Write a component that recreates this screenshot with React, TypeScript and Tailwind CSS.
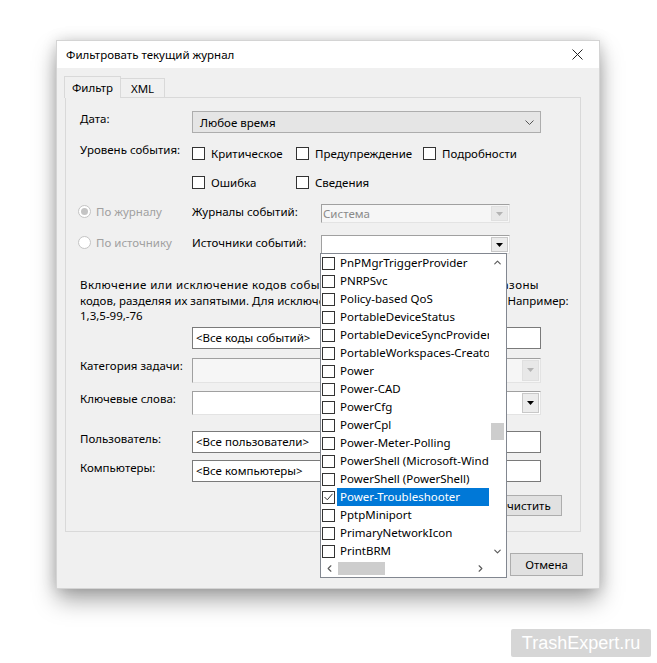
import React from 'react'
import clsx from 'clsx'
import { ChevronDown, ChevronLeft, ChevronRight, ChevronUp } from 'lucide-react'

const sources = [
  'PnPMgrTriggerProvider',
  'PNRPSvc',
  'Policy-based QoS',
  'PortableDeviceStatus',
  'PortableDeviceSyncProvider',
  'PortableWorkspaces-Creator',
  'Power',
  'Power-CAD',
  'PowerCfg',
  'PowerCpl',
  'Power-Meter-Polling',
  'PowerShell (Microsoft-Windows-PowerShell)',
  'PowerShell (PowerShell)',
  'Power-Troubleshooter',
  'PptpMiniport',
  'PrimaryNetworkIcon',
  'PrintBRM',
]

function Box({ checked = false }: { checked?: boolean }) {
  return (
    <span className="flex h-[13px] w-[13px] shrink-0 items-center justify-center border border-[#333] bg-white">
      {checked && (
        <svg width="9" height="8" viewBox="0 0 9 8">
          <path d="M0.5 4 L3.3 6.8 L8.5 0.8" fill="none" stroke="#333" strokeWidth="1" />
        </svg>
      )}
    </span>
  )
}

function Check({ label }: { label: string }) {
  return (
    <div className="flex items-center gap-[6px]">
      <Box />
      <span>{label}</span>
    </div>
  )
}

function Radio({ label, checked = false }: { label: string; checked?: boolean }) {
  return (
    <div className="-ml-[2px] flex items-center gap-[5px] text-[#a0a0a0]">
      <span className="flex h-[13px] w-[13px] items-center justify-center rounded-full border border-[#c4c4c4] bg-white">
        {checked && <span className="h-[7px] w-[7px] rounded-full bg-[#c4c4c4]" />}
      </span>
      <span>{label}</span>
    </div>
  )
}

function ArrowBtn({ disabled = false }: { disabled?: boolean }) {
  return (
    <span
      className={clsx(
        'flex h-full w-[17px] shrink-0 items-center justify-center border',
        disabled ? 'border-[#e0e0e0] bg-[#e8e8e8]' : 'border-[#c8c8c8] bg-[#ececec]'
      )}
    >
      <svg width="7" height="4" viewBox="0 0 7 4">
        <path d="M0 0h7L3.5 4z" fill={disabled ? '#b4b4b4' : '#000'} />
      </svg>
    </span>
  )
}

function Classic({ text, disabled = false, className }: { text?: string; disabled?: boolean; className: string }) {
  return (
    <div
      className={clsx(
        'flex items-stretch border-b border-l border-r border-t border-b-[#e3e3e3] border-l-[#a0a0a0] border-r-[#e3e3e3] border-t-[#a0a0a0] p-[1px]',
        disabled ? 'bg-[#f6f6f6]' : 'bg-white',
        className
      )}
    >
      <span className={clsx('flex flex-1 items-center', disabled && 'text-[#8a8a8a]')}>{text}</span>
      <ArrowBtn disabled={disabled} />
    </div>
  )
}

function TextBox({ text }: { text: string }) {
  return (
    <div className="flex h-[22px] w-[349px] items-center border border-[#7a7a7a] bg-white pl-[3px]">{text}</div>
  )
}

function SourceList() {
  return (
    <div className="absolute left-[263px] top-[212px] z-20 grid h-[325px] w-[187px] grid-cols-[1fr_17px] grid-rows-[1fr_17px] border border-[#828790] bg-white">
      <div className="min-w-0 overflow-hidden">
        {sources.map((s) => {
          const sel = s === 'Power-Troubleshooter'
          return (
            <div key={s} className="flex h-[18px] items-center pl-[1px]">
              <Box checked={sel} />
              <span
                className={clsx(
                  'ml-[2px] flex h-full flex-1 items-center whitespace-nowrap pb-[1px] pl-[3px]',
                  sel && 'bg-[#0078d7] text-white'
                )}
              >
                {s}
              </span>
            </div>
          )
        })}
      </div>
      <div className="grid grid-rows-[17px_1fr_17px]">
        <div className="flex items-center justify-center text-[#5a5a5a]">
          <ChevronUp size={11} strokeWidth={2.5} />
        </div>
        <div className="pt-[152px]">
          <div className="mx-[2px] h-[17px] bg-[#cdcdcd]" />
        </div>
        <div className="flex items-center justify-center text-[#5a5a5a]">
          <ChevronDown size={11} strokeWidth={2.5} />
        </div>
      </div>
      <div className="grid grid-cols-[17px_1fr_17px]">
        <div className="flex items-center justify-center text-[#5a5a5a]">
          <ChevronLeft size={11} strokeWidth={2.5} />
        </div>
        <div className="py-[2px]">
          <div className="h-full w-[47px] bg-[#cdcdcd]" />
        </div>
        <div className="flex items-center justify-center text-[#5a5a5a]">
          <ChevronRight size={11} strokeWidth={2.5} />
        </div>
      </div>
      <div />
    </div>
  )
}

export default function App() {
  return (
    <div className="relative h-[663px] w-[657px] overflow-hidden bg-white pl-[57px] pt-[41px] font-['Noto_Sans',sans-serif] text-[11.5px] leading-[15px] text-black">
      <div className="relative flex h-[547px] w-[542px] flex-col bg-[#f0f0f0] shadow-[0_0_0_1px_#d4d4d4,0_12px_22px_rgba(0,0,0,0.35),0_0_14px_rgba(0,0,0,0.18)]">
        {/* title bar */}
        <div className="flex h-[27px] shrink-0 items-center justify-between bg-white pl-[9px] pr-[16px]">
          <span>Фильтровать текущий журнал</span>
          <svg width="11" height="11" viewBox="0 0 11 11">
            <path d="M0.5 0.5 L10.5 10.5 M10.5 0.5 L0.5 10.5" stroke="#222" strokeWidth="1" />
          </svg>
        </div>

        <div className="flex flex-1 flex-col pl-[8px] pr-[18px] pt-[8px]">
          {/* tabs */}
          <div className="flex h-[21px] items-end">
            <div className="relative z-10 -mb-px -ml-px flex h-[22px] w-[57px] items-center justify-center border border-b-0 border-[#d9d9d9] bg-[#f0f0f0]">
              Фильтр
            </div>
            <div className="flex h-[19px] w-[44px] items-center justify-center border border-b-0 border-l-0 border-[#d9d9d9] bg-[#f0f0f0]">
              XML
            </div>
          </div>

          {/* panel */}
          <div className="flex h-[435px] flex-col border border-[#d9d9d9] pl-[14px] pr-[18px] pt-[13px]">
            <div className="flex h-[22px]">
              <div className="w-[112px] shrink-0">Дата:</div>
              <div className="flex w-[349px] items-center justify-between border border-[#adadad] bg-[#e5e5e5] pl-[7px] pr-[6px]">
                <span>Любое время</span>
                <svg width="9" height="5" viewBox="0 0 9 5">
                  <path d="M0.5 0.5 L4.5 4.5 L8.5 0.5" fill="none" stroke="#555" strokeWidth="1" />
                </svg>
              </div>
            </div>

            <div className="mt-[11px] flex h-[18px]">
              <div className="-mt-[2px] w-[112px] shrink-0">Уровень события:</div>
              <div className="grid grid-cols-[104px_127px_auto] items-center">
                <Check label="Критическое" />
                <Check label="Предупреждение" />
                <Check label="Подробности" />
              </div>
            </div>

            <div className="mt-[11px] flex h-[18px]">
              <div className="w-[112px] shrink-0" />
              <div className="grid grid-cols-[104px_127px_auto] items-center">
                <Check label="Ошибка" />
                <Check label="Сведения" />
              </div>
            </div>

            <div className="mt-[13px] flex h-[19px]">
              <div className="w-[112px] shrink-0">
                <Radio label="По журналу" checked />
              </div>
              <div className="w-[129px] shrink-0">Журналы событий:</div>
              <Classic text="Система" disabled className="w-[189px]" />
            </div>

            <div className="mt-[12px] flex h-[19px]">
              <div className="w-[112px] shrink-0">
                <Radio label="По источнику" />
              </div>
              <div className="w-[129px] shrink-0">Источники событий:</div>
              <Classic className="w-[189px]" />
            </div>

            <div className="mt-[23px] whitespace-nowrap leading-[15.5px]">
              <div className="tracking-[0.42px]">Включение или исключение кодов событий: введите номера или диапазоны</div>
              <div>кодов, разделяя их запятыми. Для исключения кодов введите знак минуса. Например:</div>
              <div>1,3,5-99,-76</div>
            </div>

            <div className="mt-[3px] flex">
              <div className="w-[112px] shrink-0" />
              <TextBox text="<Все коды событий>" />
            </div>

            <div className="mt-[9px] flex h-[25px]">
              <div className="w-[112px] shrink-0">Категория задачи:</div>
              <Classic disabled className="w-[349px]" />
            </div>

            <div className="mt-[8px] flex h-[24px]">
              <div className="w-[112px] shrink-0">Ключевые слова:</div>
              <Classic className="w-[349px]" />
            </div>

            <div className="mt-[16px] flex">
              <div className="w-[112px] shrink-0">Пользователь:</div>
              <TextBox text="<Все пользователи>" />
            </div>

            <div className="mt-[7px] flex">
              <div className="w-[112px] shrink-0">Компьютеры:</div>
              <TextBox text="<Все компьютеры>" />
            </div>

            <div className="mt-[13px] flex justify-end">
              <div className="flex h-[21px] w-[75px] items-center justify-center border border-[#adadad] bg-[#e1e1e1]">
                Очистить
              </div>
            </div>
          </div>

          {/* dialog buttons */}
          <div className="-mr-[2px] mt-[21px] flex justify-end gap-[6px]">
            <div className="flex h-[23px] w-[73px] items-center justify-center border border-[#adadad] bg-[#e1e1e1]">ОК</div>
            <div className="flex h-[23px] w-[73px] items-center justify-center border border-[#adadad] bg-[#e1e1e1]">
              Отмена
            </div>
          </div>
        </div>

        <SourceList />
      </div>

      <div className="absolute left-[511px] top-[629px] flex h-[28px] w-[140px] items-center justify-center rounded-[2px] bg-[#d6d6d6] font-['Liberation_Sans',sans-serif] text-[18px] text-white">
        TrashExpert.ru
      </div>
    </div>
  )
}
